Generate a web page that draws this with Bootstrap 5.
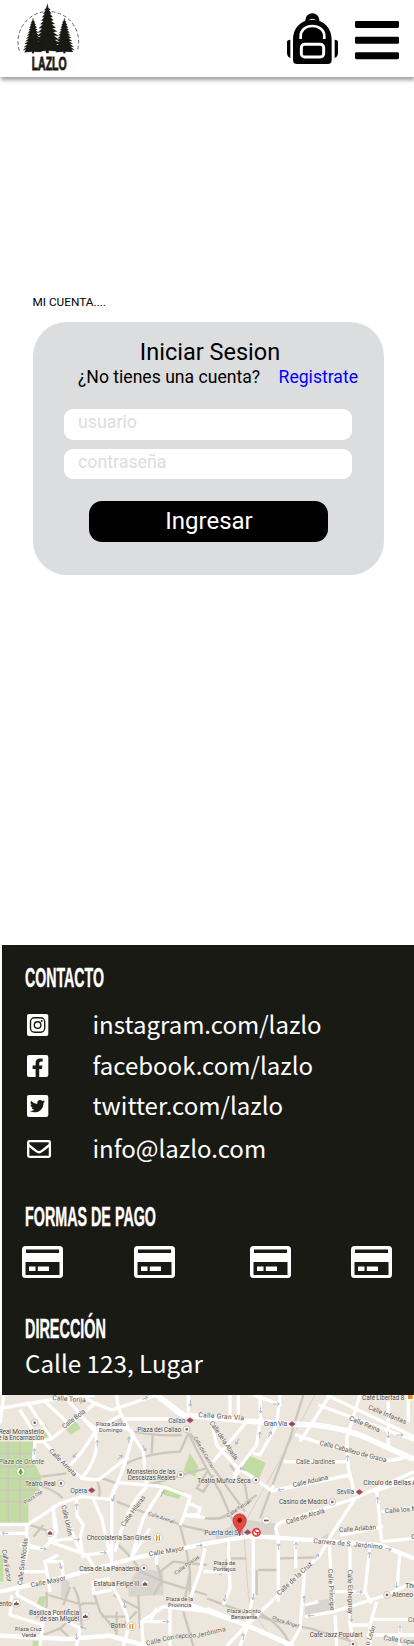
<!DOCTYPE html>
<html lang="es">
<head>
<meta charset="utf-8">
<meta name="viewport" content="width=device-width, initial-scale=1">
<title>Lazlo - Mi cuenta</title>
<link href="https://cdn.jsdelivr.net/npm/bootstrap@5.3.0/dist/css/bootstrap.min.css" rel="stylesheet">
<style>
  body { font-family: Roboto, sans-serif; color: #000; background: #fff; }
  svg { display: block; }
  .top-bar { height: 77px; padding: 0 15px 0 16px; box-shadow: 1px 3px 4px rgba(0,0,0,.38); }
  .account { height: 868px; padding: 216px 30px 0 32.5px; }
  .crumb { font-size: 11.8px; line-height: 18px; margin: 0 0 11px; }
  .login { height: 253px; border-radius: 34px; background: #dcddde; padding: 16px 32px 0 31.5px; }
  .login h1 { font-size: 23.5px; line-height: 28px; font-weight: 400; margin: 0 0 0 4px; }
  .ask { font-size: 17.6px; line-height: 23px; margin: 0 -6px 20px 14px; white-space: nowrap; }
  .ask a { color: #00f; text-decoration: none; }
  .login .form-control { height: 30.5px; border: 0; border-radius: 9px; font-size: 17.8px; line-height: 22px; padding: 0 14px 5px 14px; margin-bottom: 9px; }
  .login .form-control::placeholder { color: #dcddde; opacity: 1; }
  .login .btn { height: 41px; width: 239px; border: 0; border-radius: 13px; background: #000; color: #fff; font-size: 24px; line-height: 28px; padding: 0 0 2px 1px; margin: 13px 0 0 25px; }
  .foot { height: 450px; margin-left: 2px; background: #1a1a15; color: #fff; font-family: "Noto Sans CJK JP", sans-serif; padding: 17px 0 0 20px; }
  .foot h2 { margin: 0 0 0 2.500px; height: 32px; }
  .foot h2 svg, .brand svg { overflow: visible; }
  .foot h2 svg, .brand text { font-family: "Liberation Sans Narrow", "Liberation Sans", sans-serif; font-weight: 700; }
  .contact { padding-top: 11px; }
  .contact li { display: flex; align-items: center; padding-left: 5px; }
  .contact li > svg { width: 25px; flex: none; }
  .contact span, .address { font-size: 24px; line-height: 32px; white-space: nowrap; }
  .address { font-size: 24.2px; padding: 2px 0 0 3px; }
  .contact span { margin-left: 40.5px; padding-bottom: 3px; }
  .h40 { height: 40px; } .h42 { height: 42px; } .h38 { height: 38px; } .h48 { height: 48px; }
  .pay-title { margin-top: 28px !important; } .addr-title { margin-top: 34px !important; }
  .cards { padding-top: 13px; }
  .cards svg:nth-child(2) { margin-left: 71px; } .cards svg:nth-child(3) { margin-left: 75px; } .cards svg:nth-child(4) { margin-left: 60px; }
  .city text { font-family: Roboto, sans-serif; }
</style>
</head>
<body>
<header class="top-bar d-flex justify-content-between">
  <a class="brand" href="#" aria-label="Lazlo">
    <svg width="64" height="74" viewBox="48 0 192 222">
      <defs>
        <path id="pine" d="M0 0L3 9 9 12 5 14 12 20 7 21 16 27 9 29 18 34 11 36 22 42 13 43 25 50 15 51 29 58 17 59 32 67 19 67 35 75 22 75 39 84 26 84 42 93 30 92 36 99 4 98V103H-4V98L-36 100-29 92-42 94-26 84-38 85-22 76-35 76-19 67-31 68-17 59-28 60-15 51-25 51-13 43-21 43-11 36-18 35-9 29-15 28-7 21-12 21-5 14-9 13-3 9Z"/>
      </defs>
      <path d="M58 152A91 91 0 1 1 232 152" fill="none" stroke="#444" stroke-width="2.500" stroke-dasharray="11 7"/>
      <g fill="#1a1a15" stroke="#1a1a15" stroke-width=".6">
        <use href="#pine" transform="translate(142 11) scale(1 1.44)"/>
        <use href="#pine" transform="translate(99 54) scale(.72 1.03)"/>
        <use href="#pine" transform="translate(193 54) scale(.72 1.03)"/>
      </g>
      <text x="95" y="211" font-size="57" textLength="105" lengthAdjust="spacingAndGlyphs" fill="#1a1a15" stroke="#1a1a15" stroke-width="2.500">LAZLO</text>
    </svg>
  </a>
  <div class="d-flex">
    <svg width="51" height="64" viewBox="51 0 153 192" role="img" aria-label="Mochila">
      <path d="M106 66V60a21 20 0 0 1 42 0V66H139V61q-12-9-24 0V66ZM69 180V119C69 84 92 59 127 59S185 84 185 119V180Q185 192 173 192H81Q69 192 69 180ZM51 125Q51 120 61 119V174Q51 169 51 158ZM204 125Q204 120 194 119V174Q204 169 204 158Z"/>
      <path d="M92 117V109C92 90 107 78 127 78S163 90 163 109V117" fill="none" stroke="#fff" stroke-width="8"/>
      <rect x="94" y="133" width="67" height="38" rx="10" fill="none" stroke="#fff" stroke-width="9"/>
    </svg>
    <svg class="ms-3" width="45" height="60" viewBox="0 0 45 60" role="img" aria-label="Menú"><g><rect x="1" y="21" width="44" height="7" rx="1.4"/><rect x="1" y="36.8" width="44" height="7" rx="1.4"/><rect x="1" y="52.2" width="44" height="7" rx="1.4"/></g></svg>
  </div>
</header>

<main class="account">
  <p class="crumb">MI CUENTA....</p>
  <form class="login">
    <h1 class="text-center">Iniciar Sesion</h1>
    <p class="ask d-flex justify-content-between"><span>¿No tienes una cuenta?</span><a href="#">Registrate</a></p>
    <input class="form-control" type="text" placeholder="usuario" aria-label="usuario">
    <input class="form-control" type="password" placeholder="contraseña" aria-label="contraseña">
    <button class="btn" type="button">Ingresar</button>
  </form>
</main>

<footer class="foot">
  <h2><svg width="90" height="32"><text x="0" y="24.500" font-size="27" textLength="79" lengthAdjust="spacingAndGlyphs" fill="#fff" stroke="#fff" stroke-width=".4">CONTACTO</text></svg></h2>
  <ul class="contact list-unstyled mb-0">
    <li class="h40"><svg height="22" viewBox="0 0 25 22"><rect width="21.3" height="22" rx="2" fill="#fff"/><g fill="none" stroke="#1a1a15" stroke-width="1.4"><rect x="3.5" y="3.8" width="14.2" height="14.4" rx="4"/><circle cx="10.6" cy="11" r="3.3"/></g><circle cx="14.7" cy="6.9" r="1" fill="#1a1a15"/></svg><span>instagram.com/lazlo</span></li>
    <li class="h42"><svg height="22" viewBox="0 0 25 22"><rect width="21.3" height="22" rx="2" fill="#fff"/><path fill="#1a1a15" d="M8.6 22V13.9H5.6V10.4H8.6V7.9C8.6 4.9 10.3 3.4 13 3.4Q14.6 3.4 15.7 3.7V6.6H14.1Q12.2 6.6 12.2 8.4V10.4H15.4L14.9 13.9H12.2V22Z"/></svg><span>facebook.com/lazlo</span></li>
    <li class="h38"><svg height="22" viewBox="0 0 25 22"><rect width="21.3" height="22" rx="2" fill="#fff"/><path fill="#1a1a15" d="M18 6.4Q17.3 7.400 16.500 7.900C16.700 13 13 17.300 7.500 17.300Q5 17.300 3 16Q5.600 16.200 7.300 14.800 5.200 14.600 4.500 12.700H5.800Q3.500 12 3.400 9.600L4.700 10Q2.700 8.200 3.900 5.800 6.500 8.800 10.300 9C9.800 6.400 11.200 5 13.300 5Q14.500 5 15.400 5.900L17.400 5.200Q17.100 6.200 16.200 6.800Z"/></svg><span>twitter.com/lazlo</span></li>
    <li class="h48"><svg height="18" viewBox="0 0 25 18"><g fill="none" stroke="#fff" stroke-width="2.3"><rect x="1.2" y="1.2" width="21.700" height="15.600" rx="1.300"/><path d="M1.500 5Q6.500 9 9.300 11.200 12 13.200 14.700 11.200 17.500 9 22.500 5"/></g></svg><span>info@lazlo.com</span></li>
  </ul>
  <h2 class="pay-title"><svg width="140" height="32"><text x="0" y="24.500" font-size="27" textLength="131" lengthAdjust="spacingAndGlyphs" fill="#fff" stroke="#fff" stroke-width=".4">FORMAS DE PAGO</text></svg></h2>
  <div class="cards d-flex">
    <svg width="41" height="33"><defs><path id="pay" fill="#fff" fill-rule="evenodd" d="M3.500 0H37.500Q41 0 41 3.500V28.500Q41 32 37.500 32H3.500Q0 32 0 28.500V3.500Q0 0 3.500 0ZM4 3.500H37V7H4ZM3.500 16H37.500V29H3.500ZM7 20.500V25H13.500V20.500ZM15.800 20.500V25H27V20.500Z"/></defs><use href="#pay"/></svg>
    <svg width="41" height="33"><use href="#pay"/></svg>
    <svg width="41" height="33"><use href="#pay"/></svg>
    <svg width="41" height="33"><use href="#pay"/></svg>
  </div>
  <h2 class="addr-title"><svg width="100" height="32"><text x="0" y="24.500" font-size="27" textLength="81" lengthAdjust="spacingAndGlyphs" fill="#fff" stroke="#fff" stroke-width=".4">DIRECCIÓN</text></svg></h2>
  <p class="address mb-0">Calle 123, Lugar</p>
</footer>

<svg class="city" width="414" height="251" viewBox="0 0 1242 753" role="img" aria-label="Mapa">
  <defs>
    <g id="metro"><path fill="#e8403a" d="M-11 0L0-9 11 0 0 9Z"/><rect x="-7" y="-2.500" width="14" height="5" fill="#3a5fa8"/></g>
    <g id="spot"><circle r="10" fill="#fff" stroke="#aaa" stroke-width="2"/><rect x="-3.500" y="-3.500" width="7" height="7" fill="#8a5340"/></g>
    <g id="church"><circle r="12" fill="#fff" stroke="#bbb" stroke-width="2"/><path d="M-7 6V-1H-3L0-7 3-1H7V6Z" fill="#8a5340"/></g>
    <g id="food"><circle r="13" fill="#fff" stroke="#bbb" stroke-width="2"/><path d="M-4-8V8M4-8V8" stroke="#f58a1f" stroke-width="4"/></g>
    <path id="arr" d="M-10 0H8M2-5L9 0 2 5" fill="none" stroke="#9fb0c8" stroke-width="2.500"/>
  </defs>
  <rect width="1242" height="753" fill="#ece6dd"/>
  <!-- parks and squares -->
  <path fill="#c3dca4" d="M0 140H100V200L125 245 120 270 85 320V385H0ZM135 85L155 125 130 138ZM195 100L225 76 242 100 212 120ZM570 175L595 215 585 245 550 228ZM470 262L552 290 535 312 495 300ZM744 180L797 203 778 250 725 222ZM0 475L10 490V560H0ZM118 604H139L132 635H108ZM98 738H125V753H98Z"/>
  <g fill="#d8d5d1"><path d="M340 75L360 60 385 85 365 100ZM415 520L490 530V600L385 605V570ZM185 548L210 560 200 612 183 605ZM915 623L1000 610V655L915 660ZM700 370L825 385 825 418 650 438 645 420 690 395ZM960 430L985 415 985 450Z"/></g>
  <!-- minor streets -->
  <g fill="none" stroke="#cbc7ba" stroke-width="7">
    <g stroke-width="5"><path d="M0 175H95M0 215H100M0 250H120M0 285H120M0 320H85M25 140V385M60 140V385"/></g>
    <path d="M125 245L200 235M120 270Q180 295 187 310M290 255Q305 285 295 312M300 248L350 265M380 205Q440 175 540 170L565 115M400 110Q480 125 545 120M458 120L455 175"/>
    <path d="M440 270L500 255 560 235 620 220M350 320L440 355 560 395 620 408M340 100L365 80"/>
    <path d="M565 115Q625 235 660 290L700 380M571 115L640 220 735 350M690 210L735 270 745 330M621 230L590 280 610 290 640 240M600 368Q670 380 700 350L770 300"/>
    <path d="M910 0L885 80 870 130 780 370M621 370H660L700 350"/>
    <path d="M90 390L150 410M100 425L130 390M220 575Q240 600 245 690M145 600L250 630M280 590L300 650 350 710M210 575L190 630M350 650L350 720M245 625H290M305 665H380M140 590V635L108 670"/>
    <path d="M345 440Q410 500 420 530L490 560 621 600M480 530L520 500 621 510M570 530L555 610M415 600L420 700M540 390L560 470 570 530 570 620M470 500L485 560 460 600M130 720L180 700 215 735M180 700L240 650M340 600L415 640M410 650L370 690M550 650L580 753"/>
    <path d="M680 440L690 480 660 530M740 490H690L660 540M775 525H830M770 525V600M840 490L950 487M621 610Q800 680 930 700L1060 740M770 650Q850 690 870 753"/>
  </g>
  <path d="M945 0Q840 200 730 390L745 600Q750 670 850 753" fill="none" stroke="#cfcbc5" stroke-width="2.500"/>
  <!-- streets -->
  <g fill="none" stroke="#fff" stroke-width="10" stroke-linejoin="round">
    <path d="M0 40L150 15 285 0M0 85L12 0M130 15L200 80M150 135L285 25 240 0M80 20L155 130 120 140 60 45M285 25L335 45 470 0M190 0L285 110 365 95 400 110M260 80L285 100M285 110Q250 170 205 218M285 110Q305 180 245 250M285 105L365 60M130 140L205 218 245 250 295 255 385 185M350 0L355 40 385 100 430 170 440 270M400 110Q380 200 350 270L330 315M375 72L510 72M350 262L440 270 490 275M570 305L550 369 540 390M440 275Q380 330 345 470M490 275L430 369 395 485M490 275L570 305 565 325 600 340 595 360 550 360M550 360L615 368M130 140L105 140 100 200M465 0L540 60M565 0V50"/>
    <path d="M0 388L85 388 180 325 245 305 330 313 350 265M190 330L200 369 240 470M230 310V360L250 390 240 430 250 490M280 313L305 369 335 500M335 313V500M160 330L165 430"/>
    <path d="M715 0L715 75M690 0V75M630 60L650 150 710 215M840 0L830 90 780 180 760 175M780 80L770 150 700 240M740 80L640 200M780 0L782 80M760 0L845 30M710 215L820 290M690 265L725 220M820 270L815 288L1050 240M990 0L900 140M980 0L1242 125M1080 0L1040 130 1045 220 1065 300M955 30L1242 135M1165 20V150M1225 0V80M885 118Q970 150 1140 195 1190 200 1230 180M850 200H1045M1242 230L1130 280 1065 310 850 380Q815 390 835 425M1242 250L1120 290M1130 285L1145 440M1145 350L1242 338M1065 310L1000 410"/>
    <path d="M0 415H80L80 388M80 415L85 450 50 600M85 450L130 463 150 440 190 433 240 430M150 410V440L260 480 330 470M130 500L185 500 190 550M35 600L30 660 130 690M60 530H135M150 590L135 500 175 480M260 480L290 530M150 440L170 410 165 369M60 450L130 463M450 400L395 485M470 480V510M50 600L240 700 230 753M330 550L280 560V595L335 585M320 550Q390 650 385 700L370 753M430 753L425 680 490 635 621 650M425 680H510M510 640V753M615 460L600 530 570 610M130 670L120 753M450 680L470 640"/>
    <path d="M760 425L760 600 740 690M835 425L835 620M887 440V520M1000 410L960 480 830 605 740 690 621 640M915 520L900 700 870 753M987 440L1000 640M1050 440V680L1060 753M1110 450L1095 590 1115 625M1145 440L1242 430M740 690L870 753M915 665L1000 650 1160 600 1242 560M915 630L955 620M1005 590L1100 592M1005 660L1010 753M1130 620L1110 690 1050 690M1110 690V753M1115 673H1242M1200 690V753M1200 470L1190 590M1100 720L1242 720M1020 420L1150 395M685 440L690 580 670 630M610 530H685M745 690L720 753M680 753L740 690 775 660"/>
  </g>
  <!-- main avenues -->
  <g fill="none" stroke="#fff" stroke-width="17" stroke-linejoin="round">
    <path stroke-width="13" d="M0 590L200 545 400 490 621 445 750 423 960 437 1140 450 1242 490"/>
    <path d="M470 0L550 60 740 78 880 88Q980 85 1080 120L1242 193"/>
    <path stroke-width="14" d="M0 722L200 732 330 722 440 753M570 630L740 690 880 753"/>
  </g>
  <g>
    <use href="#arr" transform="translate(103 170) rotate(-90)"/><use href="#arr" transform="translate(292 145) rotate(-90)"/><use href="#arr" transform="translate(387 135) rotate(-90)"/><use href="#arr" transform="translate(433 160) rotate(60)"/><use href="#arr" transform="translate(225 180) rotate(125)"/><use href="#arr" transform="translate(360 187) rotate(-45)"/><use href="#arr" transform="translate(435 10) rotate(-20)"/><use href="#arr" transform="translate(571 25) rotate(90)"/><use href="#arr" transform="translate(487 297) rotate(-60)"/><use href="#arr" transform="translate(230 335) rotate(-90)"/><use href="#arr" transform="translate(340 310) rotate(110)"/>
    <use href="#arr" transform="translate(782 45) rotate(90)"/><use href="#arr" transform="translate(829 27)"/><use href="#arr" transform="translate(779 120) rotate(-90)"/><use href="#arr" transform="translate(712 140) rotate(120)"/><use href="#arr" transform="translate(810 118) rotate(-60)"/><use href="#arr" transform="translate(728 223) rotate(205)"/><use href="#arr" transform="translate(1043 190) rotate(-90)"/><use href="#arr" transform="translate(1165 120) rotate(90)"/><use href="#arr" transform="translate(1200 120)"/><use href="#arr" transform="translate(843 284) rotate(170)"/><use href="#arr" transform="translate(1133 315) rotate(-90)"/>
    <use href="#arr" transform="translate(15 415) rotate(180)"/><use href="#arr" transform="translate(130 461) rotate(10)"/><use href="#arr" transform="translate(230 433)"/><use href="#arr" transform="translate(182 512) rotate(75)"/><use href="#arr" transform="translate(310 473)"/><use href="#arr" transform="translate(374 630) rotate(80)"/><use href="#arr" transform="translate(497 680)"/><use href="#arr" transform="translate(230 725) rotate(90)"/><use href="#arr" transform="translate(250 698) rotate(200)"/><use href="#arr" transform="translate(598 452) rotate(-8)"/><use href="#arr" transform="translate(836 455) rotate(-90)"/><use href="#arr" transform="translate(888 452) rotate(-90)"/><use href="#arr" transform="translate(1108 480) rotate(-90)"/><use href="#arr" transform="translate(950 485) rotate(-50)"/><use href="#arr" transform="translate(1165 462) rotate(15)"/><use href="#arr" transform="translate(1190 570) rotate(90)"/><use href="#arr" transform="translate(760 605) rotate(100)"/><use href="#arr" transform="translate(912 612) rotate(-90)"/><use href="#arr" transform="translate(933 662) rotate(180)"/><use href="#arr" transform="translate(1078 591)"/><use href="#arr" transform="translate(1054 670) rotate(90)"/><use href="#arr" transform="translate(1200 700) rotate(-90)"/><use href="#arr" transform="translate(675 610) rotate(100)"/><use href="#arr" transform="translate(730 725) rotate(-90)"/>
  </g>
  <!-- street names -->
  <g font-size="20" fill="#5c5c5c" stroke="#f4efe8" stroke-width="3" paint-order="stroke" stroke-linejoin="round">
    <text x="157" y="15" transform="rotate(4 157 15)" textLength="100">Calle Torija</text>
    <text transform="translate(193 102) rotate(-38)" textLength="82">Calle Bola</text>
    <text transform="translate(146 169) rotate(45)" textLength="108">Calle Arrieta</text>
    <text transform="translate(75 328) rotate(-33)" font-size="15">Plaza Ote</text>
    <text transform="translate(373 396) rotate(-54)" textLength="110">Calle Hileras</text>
    <text transform="translate(184 332) rotate(77)" textLength="94">Calle Unión</text>
    <text transform="translate(443 360) rotate(18)" font-size="16" textLength="82">Calle Arenal</text>
    <text transform="translate(580 128) rotate(60)" font-size="16" textLength="112">Calle del Carmen</text>
    <text x="595" y="66" transform="rotate(4 595 66)" textLength="137">Calle Gran Vía</text>
    <text transform="translate(628 83) rotate(56)" textLength="136">Calle de la Abada</text>
    <text transform="translate(1103 42) rotate(22)" textLength="122">Calle Infantas</text>
    <text transform="translate(1046 75) rotate(22)" textLength="98">Calle Reina</text>
    <text transform="translate(958 149) rotate(15)" textLength="207">Calle Caballero de Gracia</text>
    <text x="888" y="206" textLength="117">Calle Jardines</text>
    <text transform="translate(880 277) rotate(-13)" textLength="108">Calle Aduana</text>
    <text transform="translate(684 368) rotate(-34)" font-size="16">Calle Tetuán</text>
    <text transform="translate(860 388) rotate(-17)" textLength="120">Calle de Alcalá</text>
    <text transform="translate(1155 355) rotate(-5)">Calle los M</text>
    <text transform="translate(5 465) rotate(80)" textLength="98">Calle Factor</text>
    <text transform="translate(66 571) rotate(-83)" textLength="142">Calle San Nicolás</text>
    <text transform="translate(94 577) rotate(-12)" textLength="106">Calle Mayor</text>
    <text transform="translate(448 484) rotate(-10)" textLength="107">Calle Mayor</text>
    <text transform="translate(528 540) rotate(-36)" font-size="16">Calle Postas</text>
    <text transform="translate(440 752) rotate(-14)" textLength="86">Calle Con</text><text transform="translate(526 730) rotate(-2)" textLength="76">cepción J</text><text transform="translate(604 726) rotate(-14)" textLength="76">erónima</text>
    <text transform="translate(1018 412) rotate(-5)" textLength="111">Calle Arlabán</text>
    <text transform="translate(940 444) rotate(5)" textLength="208">Carrera de S. Jerónimo</text>
    <text transform="translate(838 602) rotate(-43)" textLength="137">Calle de la Cruz</text>
    <text transform="translate(984 522) rotate(87)" textLength="125">Calle Príncipe</text>
    <text transform="translate(1043 524) rotate(89)" textLength="133">Calle Echegaray</text>
    <text transform="translate(815 673) rotate(18)" font-size="16">Plaza Ángel</text>
    <text transform="translate(1107 752) rotate(-70)">o León</text>
    <text transform="translate(1150 735) rotate(8)">Calle Lope</text>
    <text x="1224" y="680">Ca</text><text x="1234" y="433">C</text>
  </g>
  <!-- places -->
  <g font-size="20" fill="#4a4a4a" stroke="#f4efe8" stroke-width="3" paint-order="stroke" stroke-linejoin="round">
    <text x="-4" y="117" textLength="136">Real Monasterio</text><text x="-6" y="136" textLength="138">e la Encarnación</text>
    <text x="-4" y="208" textLength="136" font-style="italic" fill="#486b43">Plaza de Oriente</text>
    <text x="75" y="273" textLength="92">Teatro Real</text>
    <g fill="#285f92"><text x="211" y="294" textLength="50">Opera</text><text x="505" y="83" textLength="51">Callao</text><text x="791" y="94" textLength="70">Gran Vía</text><text x="1010" y="297" textLength="52">Sevilla</text><text x="613" y="420" textLength="117">Puerta del Sol</text></g>
    <text x="288" y="92" textLength="90" font-size="17">Plaza Santo</text><text x="297" y="110" textLength="70" font-size="17">Domingo</text>
    <text x="412" y="110" textLength="132">Plaza del Callao</text>
    <text x="380" y="238" textLength="146">Monasterio de las</text><text x="383" y="256" textLength="143">Descalzas Reales</text>
    <text x="592" y="263" textLength="160">Teatro Muñoz Seca</text>
    <text x="1086" y="14" textLength="127">Café Libertad 8</text>
    <text x="1090" y="271" textLength="160">Círculo de Bellas A</text>
    <text x="837" y="327" textLength="145">Casino de Madrid</text>
    <text x="260" y="436" textLength="193">Chocolatería San Ginés</text>
    <text x="238" y="527" textLength="179">Casa de La Panadería</text>
    <text x="281" y="573" textLength="137">Estatua Felipe III</text>
    <text x="-4" y="632">ento</text>
    <text x="87" y="660" textLength="150">Basílica Pontificia</text><text x="119" y="678" textLength="118">de san Miguel</text>
    <text x="332" y="700" textLength="44">Botín</text>
    <g font-size="17"><text x="45" y="709" textLength="80">Plaza Cruz</text><text x="65" y="727">Verde</text><text x="498" y="618" textLength="81">Plaza de la</text><text x="504" y="636">Provincia</text><text x="641" y="511">Plaza de</text><text x="640" y="529">Pontejos</text><text x="681" y="653" textLength="101">Plaza Jacinto</text><text x="693" y="671">Benavente</text></g>
    <text x="929" y="727" textLength="158">Café Jazz Populart</text><text x="1216" y="579">The</text><text x="1176" y="606">Ateneo d</text>
  </g>
  <use href="#metro" x="275" y="286"/><use href="#metro" x="570" y="76"/><use href="#metro" x="876" y="87"/><use href="#metro" x="1078" y="291"/><use href="#metro" x="743" y="412"/>
  <use href="#spot" x="104" y="83"/><use href="#spot" x="183" y="265"/><use href="#spot" x="560" y="103"/><use href="#spot" x="542" y="239"/><use href="#spot" x="768" y="255"/><use href="#spot" x="997" y="321"/><use href="#spot" x="432" y="519"/><use href="#spot" x="1161" y="600"/><use href="#spot" x="1059" y="747"/>
  <circle cx="799" cy="376" r="12" fill="#fff" stroke="#bbb" stroke-width="2"/><rect x="792" y="374" width="14" height="5" fill="#8a5340"/>
  <use href="#church" x="150" y="413"/><use href="#church" x="49" y="625"/><use href="#church" x="256" y="663"/><use href="#church" x="435" y="566"/>
  <use href="#food" x="474" y="429"/><use href="#food" x="394" y="694"/><circle cx="1231" cy="5" r="13" fill="#fff"/><rect x="1224" y="0" width="14" height="12" fill="#f58a1f"/>
  <circle cx="62" cy="230" r="13" fill="#fff" stroke="#8bb873" stroke-width="2"/><path d="M62 220l7 13h-4v6h-6v-6h-4Z" fill="#4db314"/>
  <circle cx="769" cy="412" r="11" fill="#fff" stroke="#e33" stroke-width="5"/><path d="M764 405q0 10 11 8l-4 6" stroke="#e33" stroke-width="4" fill="none"/>
  <path d="M719 423C717 402 699 396 699 376A20 20 0 0 1 739 376C739 396 721 402 719 423Z" fill="#e5493e" stroke="#b93228" stroke-width="1.500"/><circle cx="719" cy="376" r="7" fill="#6e1a16"/>
</svg>
<script src="https://cdn.jsdelivr.net/npm/bootstrap@5.3.0/dist/js/bootstrap.bundle.min.js"></script>
</body>
</html>
